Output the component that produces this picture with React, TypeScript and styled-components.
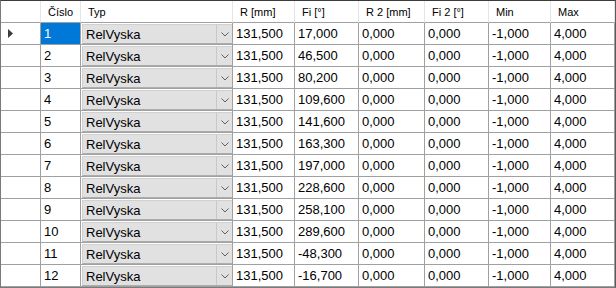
import styled, { createGlobalStyle } from 'styled-components';

const GlobalStyle = createGlobalStyle`
  html, body {
    margin: 0;
    padding: 0;
    background: #ffffff;
  }
  body {
    font-family: "Liberation Sans", Arial, sans-serif;
  }
`;

const COLUMNS = '40px 40px 152px 62px 64px 66px 64px 62px 64px';

const Grid = styled.div`
  width: 616px;
  height: 288px;
  box-sizing: border-box;
  border: 1px solid #7a7a7a;
  border-top-color: #3c3c3c;
  border-right-color: #5a5a5a;
  background: #ffffff;
  overflow: hidden;
`;

const Row = styled.div<{ $header?: boolean }>`
  display: grid;
  grid-template-columns: ${COLUMNS};
  height: ${({ $header }) => ($header ? '22px' : '22px')};
`;

const HeaderCell = styled.div`
  box-sizing: border-box;
  border-right: 1px solid #e5e5e5;
  border-bottom: 1px solid #a0a0a0;
  padding-left: 7px;
  display: flex;
  align-items: center;
  font-size: 11px;
  color: #000;
  white-space: nowrap;
`;

const RowHeader = styled.div`
  box-sizing: border-box;
  border-right: 1px solid #a0a0a0;
  border-bottom: 1px solid #a0a0a0;
  display: flex;
  align-items: center;
  padding-left: 7px;
`;

const Cell = styled.div<{ $selected?: boolean }>`
  box-sizing: border-box;
  border-right: 1px solid #a0a0a0;
  border-bottom: 1px solid #a0a0a0;
  padding-left: 3px;
  display: flex;
  align-items: center;
  font-size: 13px;
  white-space: nowrap;
  color: ${({ $selected }) => ($selected ? '#ffffff' : '#000000')};
  background: ${({ $selected }) => ($selected ? '#0078d7' : '#ffffff')};
`;

const ComboCell = styled.div`
  box-sizing: border-box;
  border-right: 1px solid #a0a0a0;
  border-bottom: 1px solid #a0a0a0;
  padding: 1px 0 0 1px;
  display: flex;
`;

const Combo = styled.div`
  flex: 1;
  box-sizing: border-box;
  display: flex;
  align-items: center;
  background: #e1e1e1;
  border: 1px solid #adadad;
  border-right: none;
  border-top-color: #d0d0d0;
  border-left-color: #d0d0d0;
  font-size: 13px;
  color: #000;
`;

const ComboText = styled.span`
  flex: 1;
  padding-left: 3px;
`;

const ComboButton = styled.span`
  width: 16px;
  height: 100%;
  box-sizing: border-box;
  border-left: 1px solid #c8c8c8;
  display: flex;
  align-items: center;
  justify-content: center;
`;

const Chevron = () => (
  <svg width="8" height="5" viewBox="0 0 8 5">
    <polyline points="0.5,0.5 4,4 7.5,0.5" fill="none" stroke="#606060" strokeWidth="1" />
  </svg>
);

const Arrow = () => (
  <svg width="5" height="9" viewBox="0 0 5 9">
    <polygon points="0,0 5,4.5 0,9" fill="#3c3c3c" />
  </svg>
);

const fi = ['17,000', '46,500', '80,200', '109,600', '141,600', '163,300', '197,000', '228,600', '258,100', '289,600', '-48,300', '-16,700'];

const headers = ['Číslo', 'Typ', 'R [mm]', 'Fi [°]', 'R 2 [mm]', 'Fi 2 [°]', 'Min', 'Max'];

export default function App() {
  return (
    <>
      <GlobalStyle />
      <Grid>
        <Row $header>
          <HeaderCell />
          {headers.map((h) => (
            <HeaderCell key={h}>{h}</HeaderCell>
          ))}
        </Row>
        {fi.map((f, i) => (
          <Row key={i}>
            <RowHeader>{i === 0 && <Arrow />}</RowHeader>
            <Cell $selected={i === 0}>{i + 1}</Cell>
            <ComboCell>
              <Combo>
                <ComboText>RelVyska</ComboText>
                <ComboButton>
                  <Chevron />
                </ComboButton>
              </Combo>
            </ComboCell>
            <Cell>131,500</Cell>
            <Cell>{f}</Cell>
            <Cell>0,000</Cell>
            <Cell>0,000</Cell>
            <Cell>-1,000</Cell>
            <Cell>4,000</Cell>
          </Row>
        ))}
      </Grid>
    </>
  );
}
